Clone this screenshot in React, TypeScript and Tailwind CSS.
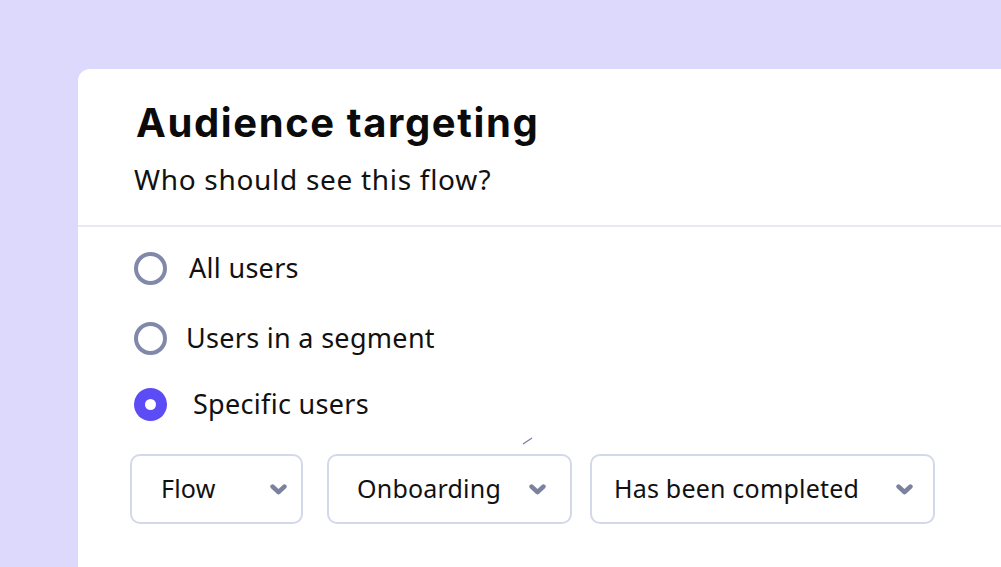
import React, { useState } from "react";

const options = ["All users", "Users in a segment", "Specific users"];

const Chevron = () => (
  <svg width="17" height="11" viewBox="0 0 17 11" className="shrink-0">
    <path d="M2.6 2.6 L8.5 8.2 L14.4 2.6" fill="none" stroke="#7b819f" strokeWidth="4.6" strokeLinecap="round" strokeLinejoin="round" />
  </svg>
);

const Select = ({ label, width, pl, pr }: { label: string; width: string; pl: string; pr: string }) => (
  <div className={`${width} ${pl} ${pr} h-[70px] flex items-center justify-between border-2 border-[#d3d8ea] rounded-[10px] bg-white`}>
    <span className="text-[25px] tracking-[0.2px] text-[#111]">{label}</span>
    <Chevron />
  </div>
);

const App = () => {
  const [selected, setSelected] = useState(2);

  return (
    <div
      className="w-[1001px] h-[567px] overflow-hidden bg-[#dcd9fc] pl-[78px] pt-[69px]"
      style={{ fontFamily: '"Noto Sans", "Open Sans", sans-serif' }}
    >
      <div className="bg-white rounded-tl-[12px] h-[600px]">
        <div className="pl-[58px] pt-[28px] h-[158px] border-b-2 border-[#e8eaf1]">
          <h1
            className="text-[40px] font-bold tracking-[1.6px] text-[#0b0b0b] leading-[52px]"
            style={{ fontFamily: 'Inter, "Noto Sans", sans-serif' }}
          >
            Audience targeting
          </h1>
          <p className="text-[28px] tracking-[0.7px] text-[#111] mt-[12px] leading-[36px] -ml-[2px]">
            Who should see this flow?
          </p>
        </div>

        <div className="pl-[56px] pt-[6px]">
          {options.map((o, i) => (
            <div
              key={o}
              onClick={() => setSelected(i)}
              className={`flex items-center cursor-pointer ${i === 2 ? "h-[62px]" : "h-[70px]"}`}
            >
              {selected === i ? (
                <span className="w-[33px] h-[33px] rounded-full bg-[#5b4cf6] flex items-center justify-center">
                  <span className="w-[11px] h-[11px] rounded-full bg-white" />
                </span>
              ) : (
                <span className="w-[33px] h-[33px] rounded-full border-[4px] border-[#8189aa]" />
              )}
              <span
                className={`text-[27px] tracking-[0.3px] text-[#111] ${
                  i === 0 ? "ml-[22px]" : i === 1 ? "ml-[19px]" : "ml-[26px]"
                }`}
              >
                {o}
              </span>
            </div>
          ))}

          <div className="relative flex gap-[24px] mt-[19px] -ml-[4px]">
            <svg width="12" height="10" className="absolute left-[392px] -top-[18px]">
              <path d="M1 8 L10 2" stroke="#7b819f" strokeWidth="1.3" />
            </svg>
            <Select label="Flow" width="w-[173px]" pl="pl-[29px]" pr="pr-[14px]" />
            <Select label="Onboarding" width="w-[245px]" pl="pl-[28px]" pr="pr-[24px]" />
            <div className="-ml-[6px]">
              <Select label="Has been completed" width="w-[345px]" pl="pl-[22px]" pr="pr-[20px]" />
            </div>
          </div>
        </div>
      </div>
    </div>
  );
};

export default App;
